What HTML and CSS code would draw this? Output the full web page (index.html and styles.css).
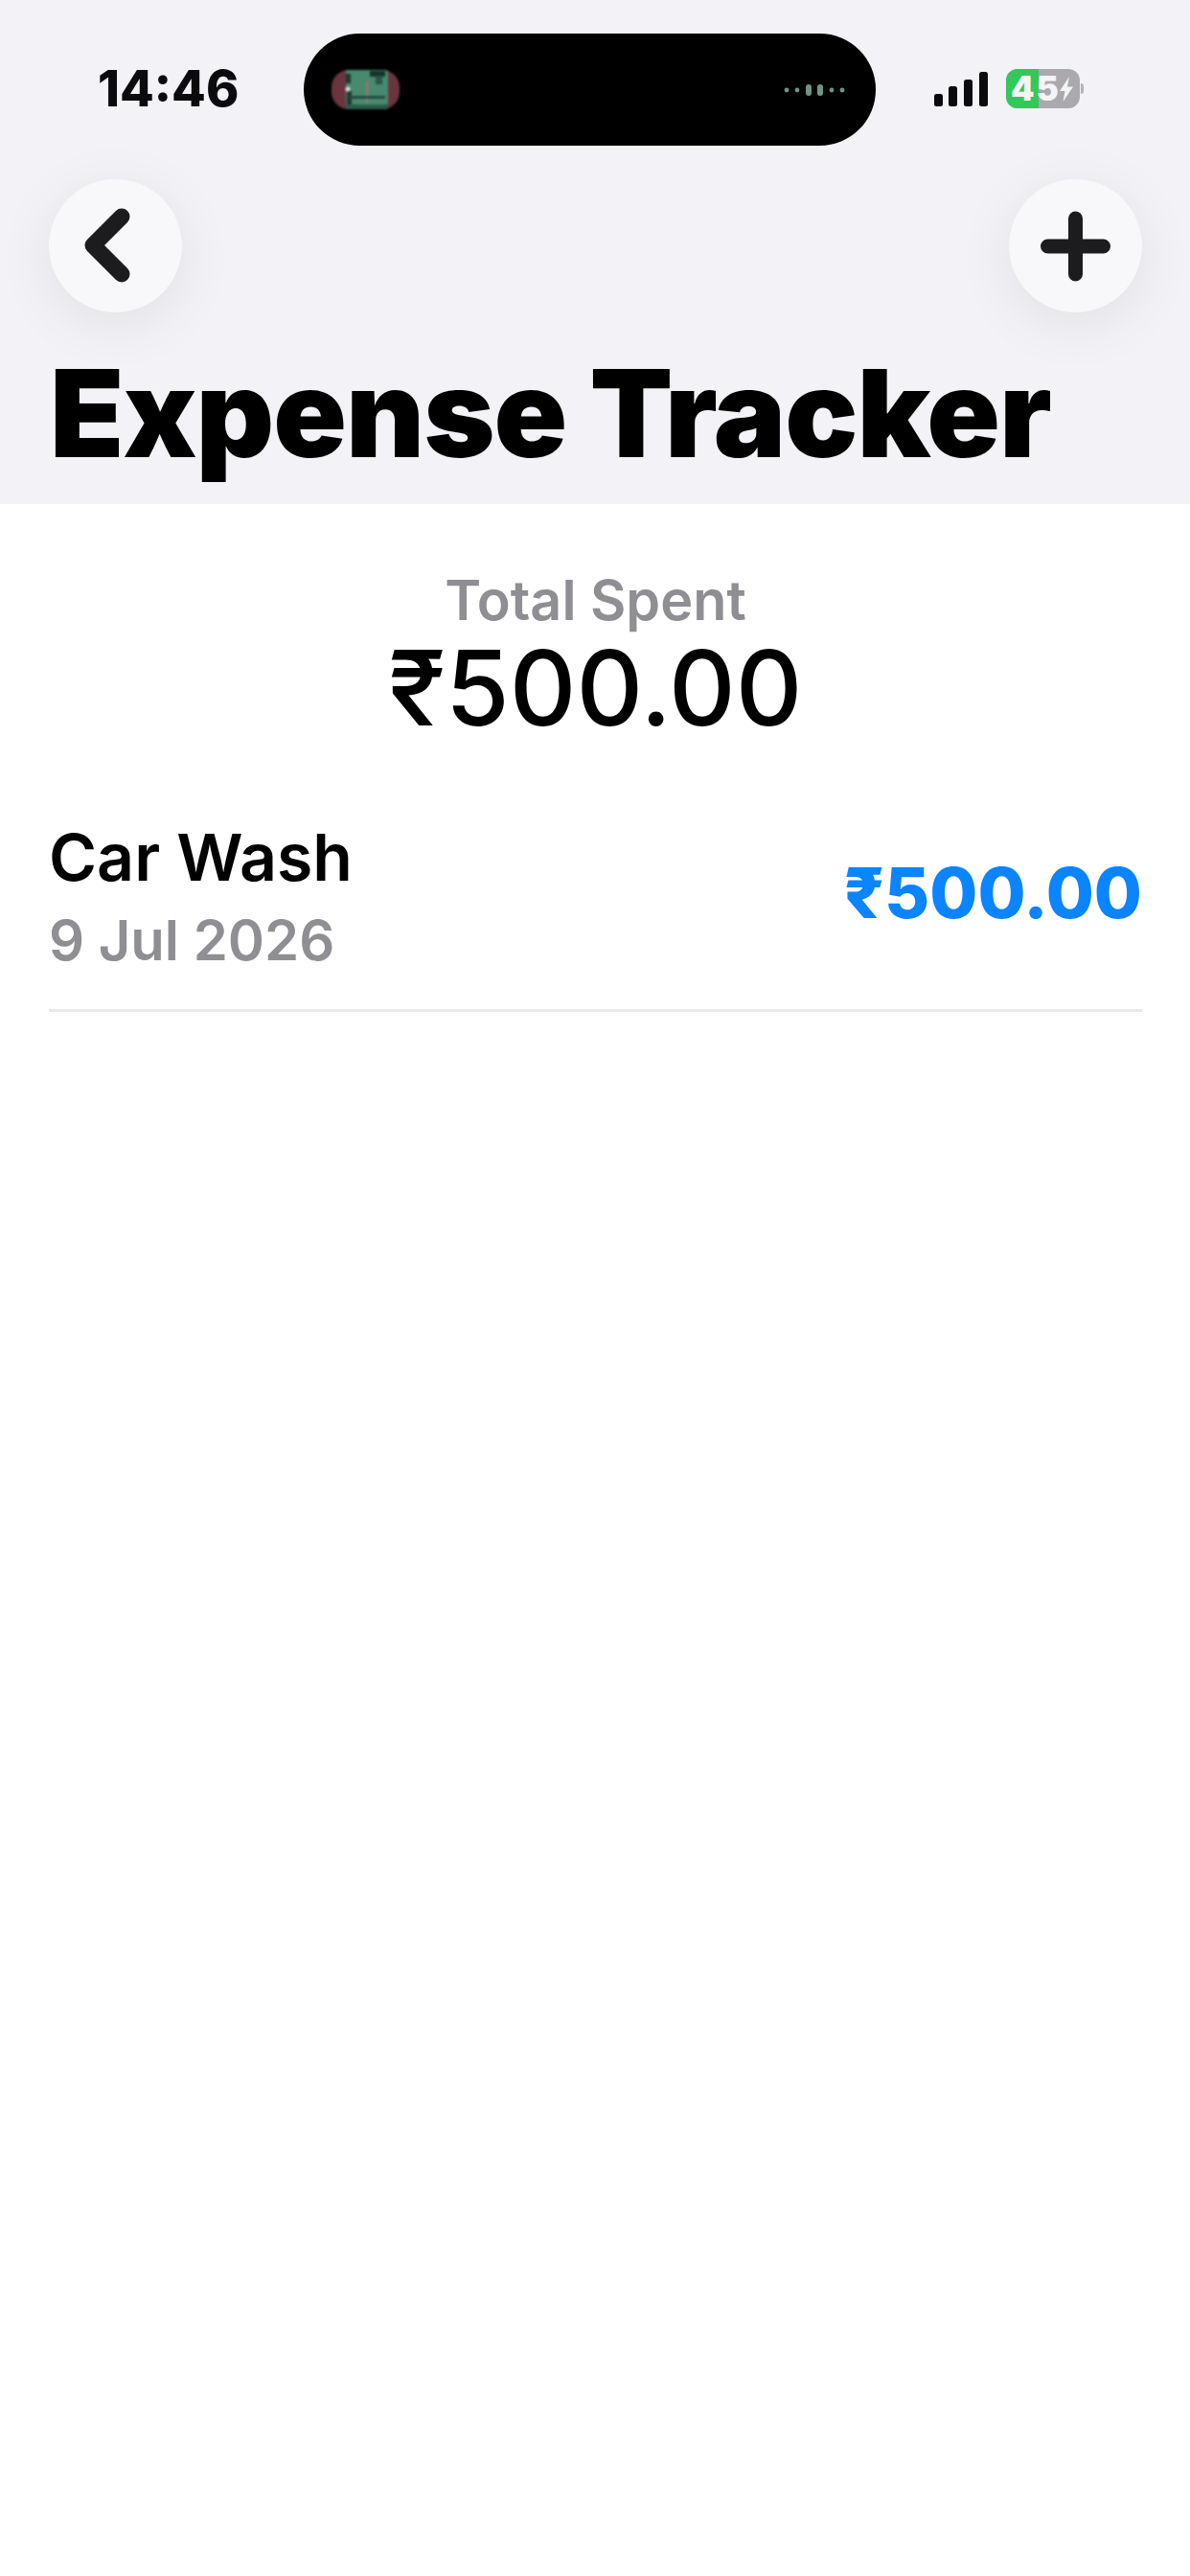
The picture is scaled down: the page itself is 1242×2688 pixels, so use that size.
FILE: index.html
```html
<!DOCTYPE html>
<html lang="en">
<head>
<meta charset="utf-8">
<title>Expense Tracker</title>
<link rel="stylesheet" href="styles.css">
</head>
<body>
<div class="screen">
  <header class="header">
    <div class="status">
      <span class="time">14:46</span>
      <div class="island">
        <svg class="thumb" viewBox="0 0 71 41" width="71" height="41">
          <defs><clipPath id="thumbclip"><rect width="71" height="41" rx="18"/></clipPath></defs>
          <g clip-path="url(#thumbclip)">
            <rect width="71" height="41" fill="#6b3540"/>
            <rect x="15" width="44" height="41" fill="#478a70"/>
            <rect x="15" y="4" width="5" height="10" fill="#1d3a2f"/>
            <rect x="16" y="22" width="5" height="15" fill="#1d3a2f"/>
            <circle cx="17" cy="20" r="2.500" fill="#d5e2dc"/>
            <rect x="40" y="1" width="16" height="6" fill="#17322a"/>
            <rect x="46" y="6" width="7" height="9" fill="#2a5548"/>
            <rect x="36" y="12" width="2" height="22" fill="#b86a72"/>
            <rect x="18" y="27" width="38" height="3" fill="#25493d"/>
            <rect x="15" y="36" width="44" height="5" fill="#2d5b4a"/>
          </g>
        </svg>
        <svg class="wave" viewBox="0 0 66 14" width="66" height="14" fill="#6f9484">
          <circle cx="4" cy="7" r="2.400"/><circle cx="15" cy="7" r="2.400"/>
          <rect x="24" y="1" width="6" height="12" rx="3"/><rect x="36" y="1" width="6" height="12" rx="3"/>
          <circle cx="51" cy="7" r="2.400"/><circle cx="62" cy="7" r="2.400"/>
        </svg>
      </div>
      <div class="indicators">
        <svg class="signal" viewBox="0 0 57 36" width="57" height="36" fill="#0b0b0d">
          <rect x="0" y="23" width="9" height="13" rx="2.500"/>
          <rect x="15" y="15" width="9" height="21" rx="2.500"/>
          <rect x="31" y="8" width="9" height="28" rx="2.500"/>
          <rect x="47" y="0" width="9" height="36" rx="2.500"/>
        </svg>
        <div class="battery">
          <div class="battery-body"><span class="battery-fill"></span><span class="battery-text">45</span>
            <svg class="bolt" viewBox="0 0 16 26" width="16" height="26"><path d="M11 0 1 15h5.500L4.500 26 15 10.500H9z" fill="#f4f4f6"/></svg>
          </div>
          <span class="battery-cap"></span>
        </div>
      </div>
    </div>
    <div class="nav">
      <button class="round" type="button" aria-label="Back">
        <svg viewBox="0 0 139 139" width="139" height="139"><path d="M76 39 46 69l30 30" fill="none" stroke="#1c1c1e" stroke-width="17" stroke-linecap="round" stroke-linejoin="round"/></svg>
      </button>
      <button class="round" type="button" aria-label="Add">
        <svg viewBox="0 0 139 139" width="139" height="139"><path d="M69.500 41v58M40.500 70h58" fill="none" stroke="#1c1c1e" stroke-width="15" stroke-linecap="round"/></svg>
      </button>
    </div>
    <h1 class="title">Expense Tracker</h1>
  </header>
  <main class="content">
    <section class="total">
      <div class="total-label">Total Spent</div>
      <div class="total-value">₹500.00</div>
    </section>
    <section class="row">
      <div class="row-main">
        <div class="row-name">Car Wash</div>
        <div class="row-date">9 Jul 2026</div>
      </div>
      <div class="row-amount">₹500.00</div>
    </section>
  </main>
</div>
</body>
</html>
```
FILE: styles.css
```css
* { box-sizing: border-box; }
html, body { margin: 0; padding: 0; background: #fff; }
body { font-family: Inter, "Liberation Sans", sans-serif; color: #000; }
.screen { width: 1242px; height: 2688px; overflow: hidden; display: flex; flex-direction: column; background: #fff; }

.header { height: 526px; background: #f2f2f7; padding: 35px 51px 0 51px; flex: none; }
.status { height: 117px; display: flex; align-items: center; position: relative; }
.time { width: 266px; padding-left: 51px; font-size: 52px; font-weight: 800; line-height: 1; color: #0b0b0d; position: relative; top: -1px; }
.island { width: 597px; height: 117px; border-radius: 58.500px; background: #000; display: flex; align-items: center; justify-content: space-between; padding: 0 31px 0 29px; flex: none; }
.thumb { display: block; margin-top: -1px; filter: blur(.8px); }
.wave { display: block; filter: blur(.6px); }
.indicators { display: flex; align-items: center; gap: 18px; margin-left: 61px; position: relative; top: -1px; }
.signal { display: block; }
.battery { display: flex; align-items: center; gap: 1px; }
.battery-body { width: 77px; height: 41px; border-radius: 12px; background: #a9a9ae; position: relative; overflow: hidden; display: flex; align-items: center; }
.battery-fill { position: absolute; left: 0; top: 0; bottom: 0; width: 34px; background: #34c759; }
.battery-text { position: relative; margin-left: 5px; font-size: 35px; font-weight: 900; line-height: 1; letter-spacing: 2px; color: #f4f4f6; }
.bolt { position: relative; margin-left: -2px; flex: none; }
.battery-cap { width: 3px; height: 11px; border-radius: 0 4px 4px 0; background: #b4b4b8; }

.nav { display: flex; justify-content: space-between; margin-top: 35px; margin-right: -1px; }
.round { width: 139px; height: 139px; padding: 0; border: 0; border-radius: 50%; background: #f8f8fa; box-shadow: 0 12px 60px rgba(0, 0, 0, .08); display: block; }
.round svg { display: block; }
.title { margin: 40px 0 0 1px; font-size: 126.500px; font-weight: 900; line-height: 130px; letter-spacing: -1px; color: #000; white-space: nowrap; }

.content { flex: 1; padding: 0 50px 0 51px; }
.total { display: flex; flex-direction: column; align-items: center; padding-top: 68px; }
.total-label { font-size: 57.500px; font-weight: 600; line-height: 64px; color: #8e8e93; }
.total-value { font-size: 108px; font-weight: 500; line-height: 112px; color: #000; margin-top: 4px; }
.row { display: flex; align-items: center; justify-content: space-between; margin-top: 78px; padding-bottom: 36px; border-bottom: 3px solid #e9e9eb; }
.row-name { font-size: 68px; font-weight: 600; line-height: 84px; color: #000; }
.row-date { font-size: 58px; font-weight: 600; line-height: 72px; color: #8e8e93; margin-top: 9px; }
.row-amount { font-size: 72.500px; font-weight: 800; line-height: 84px; color: #0a84ff; margin-bottom: 6px; }
```
